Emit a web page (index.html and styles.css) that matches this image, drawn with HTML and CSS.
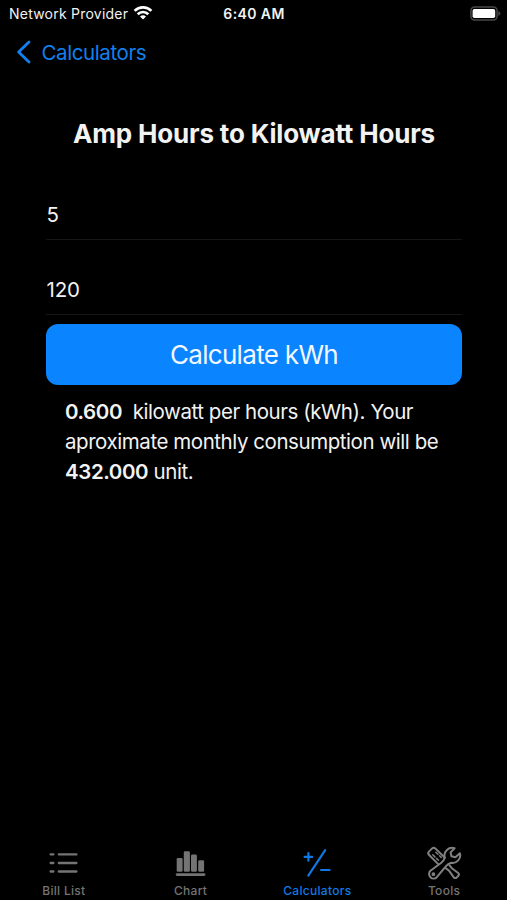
FILE: index.html
```html
<!DOCTYPE html>
<html lang="en">
<head>
  <meta charset="UTF-8">
  <title>Amp Hours to Kilowatt Hours</title>
  <link rel="stylesheet" href="styles.css">
</head>
<body>
<div class="screen">
  <div class="status-bar">
    <div class="carrier">
      <span class="carrier-name">Network Provider</span>
      <svg class="wifi" width="20" height="16" viewBox="0 0 20 16" fill="none" stroke="#fff" stroke-width="2.7">
        <path d="M1.6 5.9a11.9 11.9 0 0 1 16.8 0"/>
        <path d="M4.7 9.2a7.5 7.5 0 0 1 10.6 0"/>
        <path d="M10 14.6L7 11.6a4.3 4.3 0 0 1 6 0z" fill="#fff" stroke="none"/>
      </svg>
    </div>
    <div class="time">6:40 AM</div>
    <div class="battery">
      <svg width="31" height="15" viewBox="0 0 31 15">
        <rect x="0.9" y="0.9" width="26.2" height="13.2" rx="3.8" fill="none" stroke="#484848" stroke-width="1.5"/>
        <rect x="2.6" y="2.9" width="22.6" height="9.2" rx="1.8" fill="#fff"/>
        <path d="M28.4 5.1q2 .7 2 2.4t-2 2.4z" fill="#484848"/>
      </svg>
    </div>
  </div>

  <div class="nav-bar">
    <svg width="15" height="24" viewBox="0 0 15 24" fill="none" stroke="#1180ee" stroke-width="2.8" stroke-linecap="round" stroke-linejoin="round">
      <path d="M13 2L2.6 12 13 22"/>
    </svg>
    <span class="back-label">Calculators</span>
  </div>

  <div class="content">
    <h1>Amp Hours to Kilowatt Hours</h1>
    <div class="field">5</div>
    <div class="field">120</div>
    <button class="calculate">Calculate kWh</button>
    <p class="result"><b>0.600</b>&nbsp; kilowatt per hours (kWh). Your<br>aproximate monthly consumption will be<br><b>432.000</b> unit.</p>
  </div>

  <div class="tab-bar">
    <div class="tab">
      <svg width="36" height="36" viewBox="0 0 36 36" stroke="#747474" stroke-width="2.3" stroke-linecap="round">
        <path d="M5.6 9.4h2.8M13.8 9.4h17.6M5.6 18h2.8M13.8 18h17.6M5.6 26.5h2.8M13.8 26.5h17.6"/>
      </svg>
      <span>Bill List</span>
    </div>
    <div class="tab">
      <svg width="36" height="36" viewBox="0 0 36 36" fill="#747474">
        <rect x="4.7" y="13" width="5.9" height="13.8" rx="1.3"/>
        <rect x="11.8" y="6.2" width="6.1" height="20.6" rx="1.3"/>
        <rect x="19" y="9.6" width="5.9" height="17.2" rx="1.3"/>
        <rect x="26.2" y="15.2" width="5.9" height="11.6" rx="1.3"/>
        <rect x="3.8" y="28.2" width="29.6" height="2.7" rx="1.3"/>
      </svg>
      <span>Chart</span>
    </div>
    <div class="tab active">
      <svg width="36" height="36" viewBox="0 0 36 36" fill="none" stroke="#0f7ae6" stroke-width="2.1" stroke-linecap="round">
        <path d="M26.2 5.2L9.3 30.6M5.6 11.9h7.6M9.4 8.1v7.6M22 25h8.6"/>
      </svg>
      <span>Calculators</span>
    </div>
    <div class="tab">
      <svg width="36" height="36" viewBox="0 0 36 36" fill="none" stroke="#808080" stroke-width="2" stroke-linecap="round" stroke-linejoin="round">
        <!-- screwdriver -->
        <path d="M12.4 19.4L2.9 9.8q-1.4-1.8 0-3.2l3.2-3.2q1.6-1.4 3.2 0l9.6 9.4"/>
        <path d="M6.8 9.8l5.6 5.4M9.8 7.2l5.4 5.2" stroke-width="1.5" stroke-dasharray="3 2.2"/>
        <path d="M19.8 23.2l3.2 2.4 4.8 6.8q1.4 1.2 2.8.2l1.8-1.8q1.2-1.4-.2-2.8l-6.4-4.8-2.6-3.4"/>
        <!-- wrench -->
        <path d="M28.6 3.2A7.8 7.8 0 0 0 18.7 12.6Q18.4 15 15 18L4.4 25.8a4.5 4.5 0 1 0 6.4 6.4L19.6 21.6Q22 18.4 25.2 17.8A7.6 7.6 0 0 0 33.9 8.2L29.4 12.2 25.4 11.2 24.6 7.4Z"/>
        <circle cx="7.4" cy="29.2" r="0.9"/>
      </svg>
      <span>Tools</span>
    </div>
  </div>
</div>
</body>
</html>
```
FILE: styles.css
```css
* {
  box-sizing: border-box;
}
body {
  margin: 0;
  background-color: #000;
  color: #f2f2f2;
  font-family: Inter, "Liberation Sans", sans-serif;
}
.screen {
  height: 900px;
  display: flex;
  flex-direction: column;
  overflow: hidden;
}
.status-bar {
  height: 28px;
  padding: 0 8px 2px 9px;
  display: grid;
  grid-template-columns: 1fr auto 1fr;
  align-items: center;
  font-size: 14px;
}
.carrier {
  display: flex;
  align-items: center;
  gap: 5px;
  white-space: nowrap;
}
.carrier-name {
  letter-spacing: 0.23px;
}
.wifi {
  margin-top: -1px;
}
.time {
  font-weight: 600;
  letter-spacing: 0.4px;
}
.battery {
  display: flex;
  justify-content: flex-end;
  margin: 0 -2px 0 0;
}
.nav-bar {
  height: 48px;
  padding-left: 16px;
  display: flex;
  align-items: center;
  gap: 10.5px;
}
.back-label {
  color: #1180ee;
  font-size: 20.5px;
  letter-spacing: -0.4px;
}
.content {
  flex: 1;
  padding: 0 45px 0 46px;
}
h1 {
  margin: 42px 0 0;
  font-size: 26px;
  font-weight: 700;
  line-height: 32px;
  letter-spacing: -0.17px;
  text-align: center;
  white-space: nowrap;
}
.field {
  height: 75px;
  padding: 35px 0 0 0.5px;
  border-bottom: 1px solid #161616;
  font-size: 20.5px;
  line-height: 30px;
  letter-spacing: -0.2px;
}
h1 + .field {
  margin-top: 15px;
}
.calculate {
  display: block;
  width: 100%;
  height: 61px;
  margin-top: 9px;
  padding: 0;
  border: 0;
  border-radius: 12px;
  background-color: #0b84ff;
  color: #f2f8ff;
  font-family: inherit;
  font-size: 26px;
  letter-spacing: -0.68px;
}
.result {
  margin: 12px 0 0 19px;
  font-size: 20.5px;
  line-height: 30px;
  letter-spacing: -0.44px;
  white-space: nowrap;
}
.result b {
  font-weight: 600;
  letter-spacing: -0.4px;
}
.tab-bar {
  height: 55px;
  display: flex;
}
.tab {
  flex: 1;
  display: flex;
  flex-direction: column;
  align-items: center;
  color: #747474;
  font-size: 12px;
  font-weight: 500;
  line-height: 16px;
  letter-spacing: 0.3px;
}
.tab span {
  margin: 2px 0 0 1px;
}
.tab.active {
  color: #0f7ae6;
}
```
